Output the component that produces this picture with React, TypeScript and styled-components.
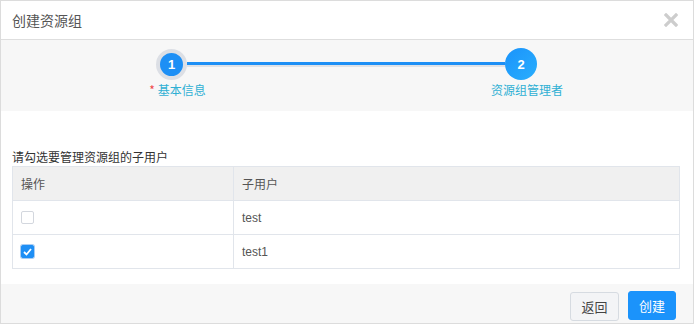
import React from "react";
import styled, { createGlobalStyle } from "styled-components";

const Global = createGlobalStyle`
  html, body { margin: 0; padding: 0; background: #fff; }
  body { font-family: "Liberation Sans", "Noto Sans CJK SC", sans-serif; }
  * { box-sizing: border-box; }
`;

const Dialog = styled.div`
  width: 694px;
  height: 324px;
  border: 1px solid #dcdcdc;
  display: flex;
  flex-direction: column;
  background: #fff;
`;

const Header = styled.div`
  height: 39px;
  flex: 0 0 39px;
  border-bottom: 1px solid #dedede;
  display: flex;
  align-items: center;
  justify-content: space-between;
  padding: 0 15px 1px 11px;
`;

const Title = styled.div`
  font-size: 14px;
  color: #555;
  font-family: "Noto Sans CJK SC", sans-serif;
`;

const Close = styled.button`
  border: 0;
  background: none;
  padding: 0;
  width: 14px;
  height: 14px;
  display: flex;
  cursor: pointer;
`;

const StepsArea = styled.div`
  flex: 0 0 71px;
  background: #f7f7f7;
  display: flex;
  align-items: flex-start;
  padding: 8px 0 0 155px;
`;

const Step = styled.div<{ $w: number; $top: number }>`
  width: ${(p) => p.$w}px;
  margin-top: ${(p) => p.$top}px;
  display: flex;
  flex-direction: column;
  align-items: center;
`;

const Circle = styled.div<{ $ring?: boolean }>`
  width: ${(p) => (p.$ring ? 31 : 32)}px;
  height: ${(p) => (p.$ring ? 31 : 32)}px;
  border-radius: 50%;
  background: ${(p) =>
    p.$ring ? "#1d8ff5" : "linear-gradient(135deg, #1a93fb, #29aefd)"};
  border: ${(p) => (p.$ring ? "4px solid #dcdfe5" : "none")};
  color: #fff;
  font-size: 13px;
  font-weight: bold;
  display: flex;
  align-items: center;
  justify-content: center;
`;

const StepLabel = styled.div<{ $top: number }>`
  margin-top: ${(p) => p.$top}px;
  padding-left: 12px;
  white-space: nowrap;
  font-size: 12px;
  line-height: 16px;
  color: #2fb0d4;
  font-family: "Noto Sans CJK SC", sans-serif;
`;

const Star = styled.span`
  color: #f04848;
  margin-right: 3px;
`;

const Connector = styled.div`
  flex: 0 0 318px;
  height: 5px;
  margin-top: 14px;
  border-top: 3px solid #1d8ff5;
  background: #dfe2e7;
`;

const Body = styled.div`
  flex: 1;
  padding: 38px 13px 0 11px;
`;

const Hint = styled.div`
  font-size: 12px;
  line-height: 16px;
  color: #333;
  margin-bottom: 1px;
  font-family: "Noto Sans CJK SC", sans-serif;
`;

const Table = styled.div`
  width: 668px;
  border: 1px solid #e1e5eb;
`;

const Row = styled.div<{ $head?: boolean }>`
  display: grid;
  grid-template-columns: 220px 1fr;
  height: 34px;
  background: ${(p) => (p.$head ? "#f0f0f0" : "#fff")};
  border-bottom: 1px solid #e1e5eb;
  &:last-child {
    border-bottom: 0;
    height: 33px;
  }
`;

const Cell = styled.div<{ $head?: boolean; $divider?: boolean }>`
  display: flex;
  align-items: center;
  padding-left: 8px;
  border-left: ${(p) => (p.$divider ? "1px solid #e1e5eb" : "0")};
  font-size: 12px;
  color: #555;
  font-weight: 400;
  font-family: ${(p) =>
    p.$head ? '"Noto Sans CJK SC", sans-serif' : '"Liberation Sans", "Noto Sans CJK SC", sans-serif'};
`;

const Check = styled.span<{ $on?: boolean }>`
  width: 13px;
  height: 13px;
  border-radius: 2px;
  border: 1px solid ${(p) => (p.$on ? "#1e8ff5" : "#d3d7de")};
  background: ${(p) => (p.$on ? "#1e8ff5" : "#fff")};
  box-shadow: ${(p) => (p.$on ? "0 0 0 1px #a9cdf3" : "none")};
  display: flex;
  align-items: center;
  justify-content: center;
`;

const Footer = styled.div`
  flex: 0 0 39px;
  background: #f7f7f7;
  display: flex;
  justify-content: flex-end;
  align-items: flex-start;
  gap: 9px;
  padding: 7px 17px 0 0;
`;

const Button = styled.button<{ $primary?: boolean }>`
  height: 29px;
  width: ${(p) => (p.$primary ? 48 : 49)}px;
  border-radius: 3px;
  border: 1px solid ${(p) => (p.$primary ? "#1b93fb" : "#d6dbe1")};
  background: ${(p) => (p.$primary ? "#1b93fb" : "#f3f4f6")};
  color: ${(p) => (p.$primary ? "#fff" : "#444")};
  font-size: 13px;
  font-family: "Noto Sans CJK SC", sans-serif;
  padding: 0;
  margin-top: ${(p) => (p.$primary ? 0 : 1)}px;
  cursor: pointer;
`;

const users = [
  { name: "test", checked: false },
  { name: "test1", checked: true },
];

export default function App() {
  return (
    <>
      <Global />
      <Dialog>
        <Header>
          <Title>创建资源组</Title>
          <Close aria-label="close">
            <svg width="14" height="14" viewBox="0 0 14 14">
              <path d="M2 2 L12 12 M12 2 L2 12" stroke="#cdcdcd" strokeWidth="3.2" strokeLinecap="square" />
            </svg>
          </Close>
        </Header>
        <StepsArea>
          <Step $w={31} $top={1}>
            <Circle $ring>1</Circle>
            <StepLabel $top={2}>
              <Star>*</Star>基本信息
            </StepLabel>
          </Step>
          <Connector />
          <Step $w={32} $top={0}>
            <Circle>2</Circle>
            <StepLabel $top={2}>资源组管理者</StepLabel>
          </Step>
        </StepsArea>
        <Body>
          <Hint>请勾选要管理资源组的子用户</Hint>
          <Table>
            <Row $head>
              <Cell $head>操作</Cell>
              <Cell $head $divider>子用户</Cell>
            </Row>
            {users.map((u) => (
              <Row key={u.name}>
                <Cell>
                  <Check $on={u.checked}>
                    {u.checked && (
                      <svg width="9" height="8" viewBox="0 0 9 8">
                        <path d="M1 4 L3.5 6.5 L8 1" fill="none" stroke="#fff" strokeWidth="1.8" />
                      </svg>
                    )}
                  </Check>
                </Cell>
                <Cell $divider>{u.name}</Cell>
              </Row>
            ))}
          </Table>
        </Body>
        <Footer>
          <Button>返回</Button>
          <Button $primary>创建</Button>
        </Footer>
      </Dialog>
    </>
  );
}
